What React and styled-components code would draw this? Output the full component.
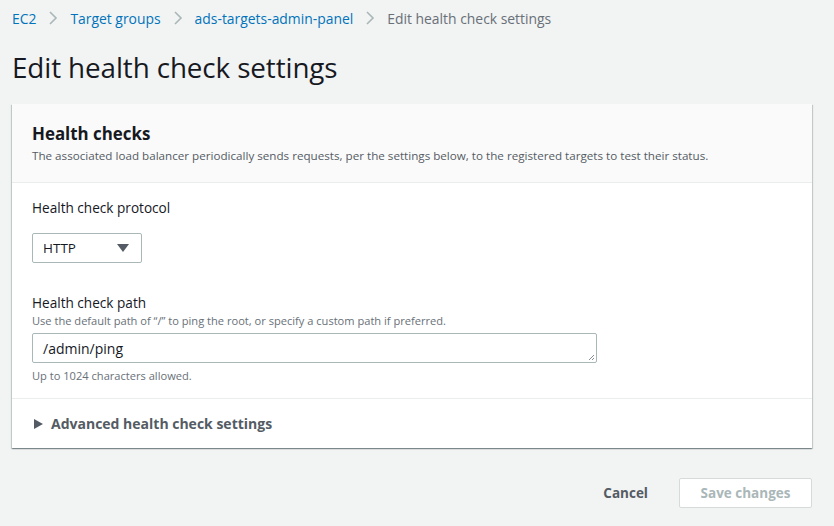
import React from "react";
import styled, { createGlobalStyle } from "styled-components";

const GlobalStyle = createGlobalStyle`
  body {
    margin: 0;
    background: #f2f3f3;
    font-family: "Open Sans", "Noto Sans", Arial, sans-serif;
    color: #16191f;
  }
`;

const Page = styled.div`
  padding: 0 22px 0 12px;
  width: 834px;
  height: 526px;
  box-sizing: border-box;
`;

const Breadcrumbs = styled.nav`
  display: flex;
  align-items: center;
  height: 36px;
  font-size: 13.9px;
`;

const Crumb = styled.a`
  color: ${(p) => (p.current ? "#687078" : "#0073bb")};
  text-decoration: none;
`;

const Chevron = styled.svg`
  margin: 0 12px;
  width: 10px;
  height: 14px;
`;

const Title = styled.h1`
  margin: 11px 0 0;
  font-size: 27.8px;
  font-weight: 400;
  letter-spacing: -0.1px;
  line-height: 40px;
`;

const Card = styled.section`
  margin-top: 17px;
  background: #fff;
  box-shadow: 0 1px 1px 0 rgba(0, 28, 36, 0.3), 1px 1px 1px 0 rgba(0, 28, 36, 0.15),
    -1px 1px 1px 0 rgba(0, 28, 36, 0.15);
`;

const CardHeader = styled.header`
  background: #fafafa;
  border-bottom: 1px solid #eaeded;
  padding: 18px 20px 18px;
`;

const CardTitle = styled.h2`
  margin: 0;
  font-size: 16.9px;
  font-weight: 700;
  line-height: 24px;
`;

const CardDesc = styled.p`
  margin: 2px 0 0;
  font-size: 11.65px;
  color: #545b64;
  line-height: 16px;
`;

const CardBody = styled.div`
  padding: 16px 20px 15px;
`;

const Field = styled.div`
  margin-bottom: ${(p) => p.gap || 0}px;
`;

const Label = styled.div`
  font-size: 13.6px;
  line-height: 18px;
  color: #16191f;
`;

const Hint = styled.div`
  font-size: 11.1px;
  line-height: 15px;
  color: #687078;
  margin-top: ${(p) => p.top || 0}px;
`;

const Select = styled.div`
  margin-top: 16px;
  width: 110px;
  height: 30px;
  box-sizing: border-box;
  border: 1px solid #aab7b8;
  border-radius: 2px;
  display: flex;
  align-items: center;
  justify-content: space-between;
  padding: 0 12px 0 10px;
  font-size: 13.5px;
  color: #16191f;
`;

const Caret = styled.svg`
  width: 12px;
  height: 10px;
`;

const TextArea = styled.div`
  position: relative;
  margin-top: 5px;
  width: 565px;
  height: 30px;
  box-sizing: border-box;
  border: 1px solid #aab7b8;
  border-radius: 2px;
  padding: 0 10px;
  display: flex;
  align-items: center;
  font-size: 14px;
`;

const Grip = styled.svg`
  position: absolute;
  right: 1px;
  bottom: 1px;
  width: 8px;
  height: 8px;
`;

const Expander = styled.div`
  border-top: 1px solid #eaeded;
  padding: 16px 20px 15px 22px;
  display: flex;
  align-items: center;
  gap: 8px;
  font-size: 14px;
  font-weight: 700;
  color: #545b64;
  line-height: 18px;
`;

const Footer = styled.div`
  display: flex;
  justify-content: flex-end;
  align-items: center;
  gap: 31px;
  margin-top: 30px;
`;

const LinkButton = styled.button`
  border: none;
  background: none;
  font-family: inherit;
  font-size: 13.5px;
  font-weight: 700;
  color: #545b64;
  padding: 0;
`;

const PrimaryButton = styled.button`
  width: 133px;
  height: 30px;
  background: #fff;
  border: 1px solid #d5dbdb;
  border-radius: 2px;
  font-family: inherit;
  font-size: 13.5px;
  font-weight: 700;
  color: #aab7b8;
`;

function Sep() {
  return (
    <Chevron viewBox="0 0 10 14">
      <path d="M2 1l6 6-6 6" fill="none" stroke="#aab7b8" strokeWidth="1.6" />
    </Chevron>
  );
}

export default function App() {
  return (
    <Page>
      <GlobalStyle />
      <Breadcrumbs>
        <Crumb>EC2</Crumb>
        <Sep />
        <Crumb>Target groups</Crumb>
        <Sep />
        <Crumb>ads-targets-admin-panel</Crumb>
        <Sep />
        <Crumb current>Edit health check settings</Crumb>
      </Breadcrumbs>
      <Title>Edit health check settings</Title>
      <Card>
        <CardHeader>
          <CardTitle>Health checks</CardTitle>
          <CardDesc>
            The associated load balancer periodically sends requests, per the settings below, to the registered targets to test their status.
          </CardDesc>
        </CardHeader>
        <CardBody>
          <Field gap={31}>
            <Label>Health check protocol</Label>
            <Select>
              HTTP
              <Caret viewBox="0 0 12 10">
                <path d="M0 1h12L6 9z" fill="#545b64" />
              </Caret>
            </Select>
          </Field>
          <Field>
            <Label>Health check path</Label>
            <Hint top={1}>Use the default path of “/” to ping the root, or specify a custom path if preferred.</Hint>
            <TextArea>
              /admin/ping
              <Grip viewBox="0 0 8 8">
                <path d="M7 2L2 7M7 5L5 7" stroke="#687078" strokeWidth="0.8" />
              </Grip>
            </TextArea>
            <Hint top={5}>Up to 1024 characters allowed.</Hint>
          </Field>
        </CardBody>
        <Expander>
          <svg width="9" height="10" viewBox="0 0 9 10">
            <path d="M0 0l9 5-9 5z" fill="#545b64" />
          </svg>
          Advanced health check settings
        </Expander>
      </Card>
      <Footer>
        <LinkButton>Cancel</LinkButton>
        <PrimaryButton>Save changes</PrimaryButton>
      </Footer>
    </Page>
  );
}
